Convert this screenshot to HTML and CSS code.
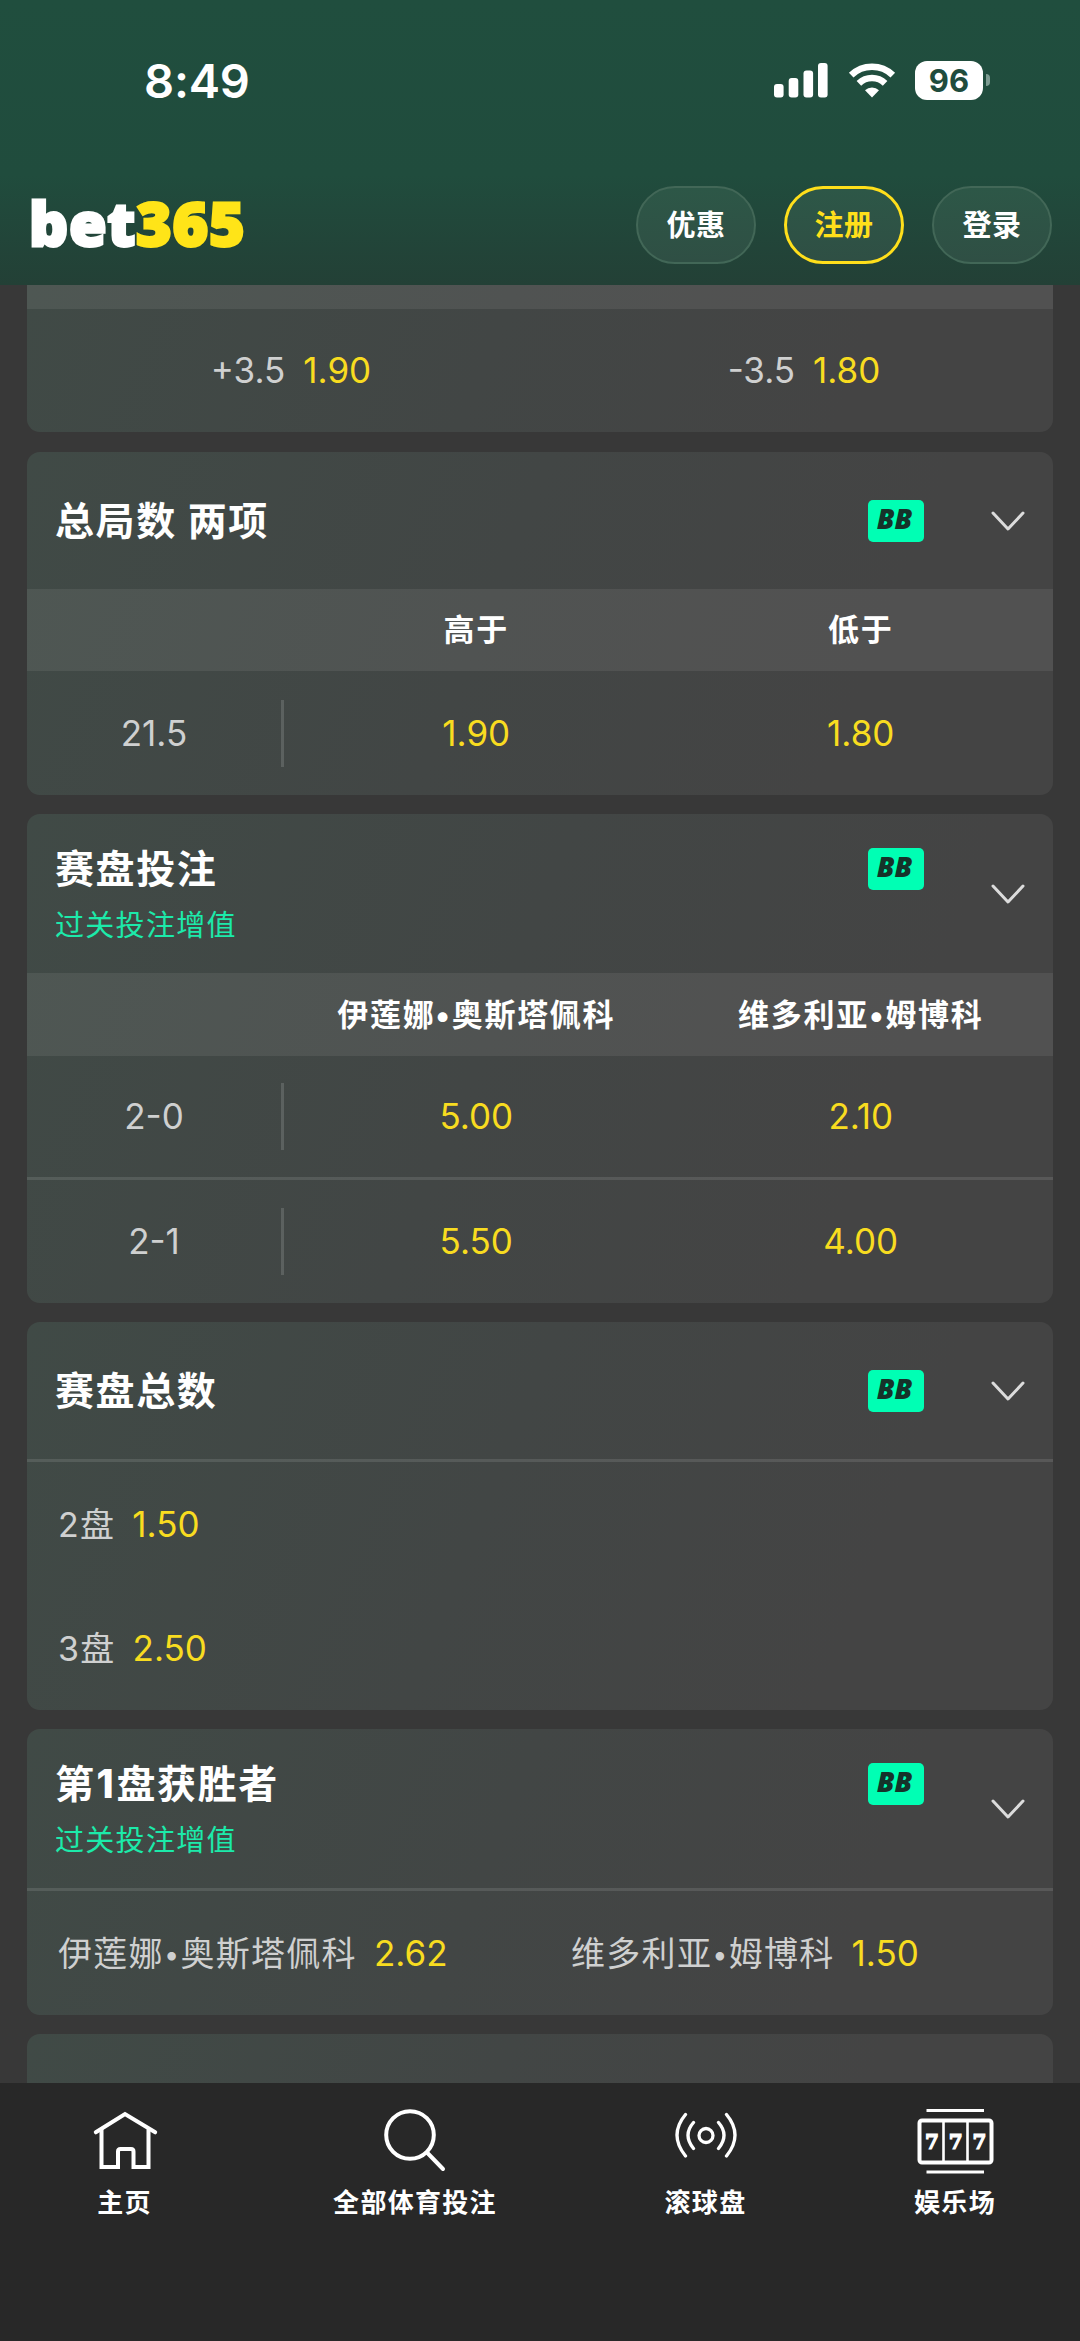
FILE: index.html
```html
<!DOCTYPE html>
<html lang="zh-CN">
<head>
<meta charset="utf-8">
<title>bet365</title>
<link rel="stylesheet" href="styles.css">
</head>
<body>
<svg width="0" height="0" class="defs" aria-hidden="true">
  <symbol id="chevron" viewBox="0 0 34 22"><path d="M2 3 17 19 32 3" fill="none" stroke="#dcdcdc" stroke-width="3" stroke-linecap="round" stroke-linejoin="round"/></symbol>
</svg>
<div class="screen">
  <header class="top">
    <div class="status">
      <div class="time">8:49</div>
      <div class="status-icons">
        <svg class="signal" width="54" height="38" viewBox="0 0 54 38" fill="#fff"><rect y="23" width="9.6" height="13.5" rx="3"/><rect x="14.7" y="17" width="9.6" height="19.5" rx="3"/><rect x="29.5" y="9.5" width="9.6" height="27" rx="3"/><rect x="44" y="2" width="9.6" height="34.5" rx="3"/></svg>
        <svg class="wifi" width="48" height="38" viewBox="0 0 48 38"><g fill="none" stroke="#fff" stroke-width="6.6"><path d="M3.2 14.2A30 30 0 0 1 44.8 14.2"/><path d="M10.9 22.3A19 19 0 0 1 37.1 22.3"/></g><path d="M17 29.2A10.3 10.3 0 0 1 31 29.2L24 36.6Z" fill="#fff"/></svg>
        <div class="battery">96</div>
        <div class="nub"></div>
      </div>
    </div>
    <div class="bar">
      <div class="logo">bet<span class="logo-num">365</span></div>
      <div class="actions">
        <div class="pill">优惠</div>
        <div class="pill join">注册</div>
        <div class="pill">登录</div>
      </div>
    </div>
  </header>

  <main class="list">
    <section class="card card-cut">
      <div class="strip strip-cut"></div>
      <div class="row two first">
        <div class="cell mid"><span class="name">+3.5</span><span class="odds">1.90</span></div>
        <div class="cell mid"><span class="name">-3.5</span><span class="odds">1.80</span></div>
      </div>
    </section>

    <section class="card">
      <div class="head"><div class="titles"><div class="title-row"><h2 class="title">总局数 两项</h2><span class="bb">BB</span></div></div><svg class="chev"><use href="#chevron"/></svg></div>
      <div class="strip"><span></span><span>高于</span><span>低于</span></div>
      <div class="row three"><div class="cell label">21.5</div><div class="cell odds">1.90</div><div class="cell odds">1.80</div></div>
    </section>

    <section class="card">
      <div class="head tall"><div class="titles"><div class="title-row"><h2 class="title">赛盘投注</h2><span class="bb">BB</span></div><div class="boost">过关投注增值</div></div><svg class="chev"><use href="#chevron"/></svg></div>
      <div class="strip strip-names"><span></span><span>伊莲娜<i class="dot">•</i>奥斯塔佩科</span><span>维多利亚<i class="dot">•</i>姆博科</span></div>
      <div class="row three upper"><div class="cell label">2-0</div><div class="cell odds">5.00</div><div class="cell odds">2.10</div></div>
      <div class="row three lower"><div class="cell label">2-1</div><div class="cell odds">5.50</div><div class="cell odds">4.00</div></div>
    </section>

    <section class="card">
      <div class="head ruled"><div class="titles"><div class="title-row"><h2 class="title">赛盘总数</h2><span class="bb">BB</span></div></div><svg class="chev"><use href="#chevron"/></svg></div>
      <div class="row"><div class="cell start"><span class="name">2盘</span><span class="odds">1.50</span></div></div>
      <div class="row"><div class="cell start"><span class="name">3盘</span><span class="odds">2.50</span></div></div>
    </section>

    <section class="card">
      <div class="head tall ruled"><div class="titles"><div class="title-row"><h2 class="title">第<b class="digit">1</b>盘获胜者</h2><span class="bb">BB</span></div><div class="boost">过关投注增值</div></div><svg class="chev"><use href="#chevron"/></svg></div>
      <div class="row two">
        <div class="cell start"><span class="name">伊莲娜<i class="dot">•</i>奥斯塔佩科</span><span class="odds">2.62</span></div>
        <div class="cell start"><span class="name">维多利亚<i class="dot">•</i>姆博科</span><span class="odds">1.50</span></div>
      </div>
    </section>

    <section class="card card-next"></section>
  </main>

  <nav class="nav">
    <div class="tab">
      <svg width="76" height="76" viewBox="0 0 76 76" fill="none" stroke="#fff" stroke-width="4" stroke-linecap="round"><path d="M8.800 29.300 38 11 68.200 29.300"/><path d="M14.500 27V64H31V48.500Q31 46 33.500 46H44Q46.500 46 46.500 48.500V64H61.500V27"/></svg>
      <span>主页</span>
    </div>
    <div class="tab">
      <svg width="76" height="76" viewBox="0 0 76 76" fill="none" stroke="#fff" stroke-width="4" stroke-linecap="round"><circle cx="33" cy="32" r="23.800"/><path d="M50 49.500 66 66"/></svg>
      <span>全部体育投注</span>
    </div>
    <div class="tab">
      <svg width="76" height="76" viewBox="0 0 76 76" fill="none" stroke="#fff" stroke-width="3.300" stroke-linecap="round"><circle cx="38" cy="32.500" r="7"/><path d="M25.500 19.500Q14.500 32 25.500 45.500M50.500 19.500Q61.500 32 50.500 45.500M17.500 11.500Q.500 32 17.500 53M58.500 11.500Q75.500 32 58.500 53"/></svg>
      <span>滚球盘</span>
    </div>
    <div class="tab">
      <svg width="80" height="76" viewBox="0 0 80 76" fill="none" stroke="#fff"><path d="M11.500 7.500H69M11.500 69H69" stroke-width="3"/><rect x="4.500" y="17.500" width="72" height="42" rx="2.500" stroke-width="4"/><path d="M28.500 17V59M52.500 17V59" stroke-width="2.600"/><g class="sevens" fill="#fff" stroke-width="1.200"><text x="17" y="45.500">7</text><text x="40.700" y="45.500">7</text><text x="64.500" y="45.500">7</text></g></svg>
      <span>娱乐场</span>
    </div>
  </nav>
</div>
</body>
</html>
```
FILE: styles.css
```css
* { box-sizing: border-box; }
body {
  margin: 0;
  background: #383838;
  color: #fff;
  font-family: Inter, "Noto Sans CJK SC", sans-serif;
}
.defs { position: absolute; }
.screen {
  width: 1080px;
  height: 2341px;
  display: flex;
  flex-direction: column;
  overflow: hidden;
}

/* Header */
.top {
  flex: none;
  height: 285px;
  background: linear-gradient(#204e3e 0, #204c3d 175px, #234036 285px);
}
.status {
  height: 160px;
  padding: 0 90px 0 144px;
  display: flex;
  justify-content: space-between;
  align-items: center;
}
.time { font-size: 47px; font-weight: 580; line-height: 60px; letter-spacing: -.2px; padding-top: 2px; }
.status-icons { display: flex; align-items: center; }
.wifi { margin: 0 19px 0 20px; }
.battery {
  width: 68px;
  height: 39px;
  border-radius: 12px;
  background: #fff;
  color: #204c3d;
  font-size: 31px;
  font-weight: 700;
  line-height: 39px;
  text-align: center;
}
.nub { width: 4px; height: 12px; margin-left: 3px; border-radius: 0 6px 6px 0; background: #7d9c92; }
.bar {
  height: 129px;
  padding: 0 28px 0 29px;
  display: flex;
  justify-content: space-between;
  align-items: center;
}
.logo { padding-bottom: 3px; font: 900 61px/78px "Noto Sans", sans-serif; letter-spacing: .7px; -webkit-text-stroke: 2.8px currentColor; }
.logo-num { color: #ffe418; }
.actions { display: flex; gap: 28px; }
.pill {
  width: 120px;
  height: 78px;
  padding-top: 1px;
  border: 2px solid #426757;
  border-radius: 39px;
  background: linear-gradient(#2d5747, #2f4f44);
  font-size: 29px;
  font-weight: 700;
  line-height: 74px;
  letter-spacing: .6px;
  text-align: center;
}
.join { border: 3px solid #ffdf1b; padding-top: 0; color: #ffdf1b; }

/* Markets */
.list {
  flex: none;
  height: 1798px;
  padding: 0 27px;
  display: flex;
  flex-direction: column;
  gap: 19px;
  overflow: hidden;
}
.card {
  flex: none;
  border-radius: 13px;
  background: linear-gradient(112deg, #404a46 0%, #424645 45%, #444444 80%);
  overflow: hidden;
}
.card-cut { border-radius: 0 0 13px 13px; margin-bottom: 1px; }
.card-next { height: 137px; }
.head {
  height: 137px;
  padding: 0 28px;
  display: flex;
  align-items: center;
}
.tall { height: 159px; }
.ruled { height: 140px; border-bottom: 3px solid rgba(255,255,255,.11); }
.tall.ruled { height: 162px; }
.titles { flex: none; width: 869px; }
.title-row { height: 60px; display: flex; justify-content: space-between; align-items: center; }
.title { margin: 0; font-size: 39px; font-weight: 700; line-height: 58px; letter-spacing: 1.6px; }
.digit { font-weight: 800; padding: 0 1px; }
.bb {
  width: 56px;
  height: 42px;
  padding-right: 3px;
  border-radius: 5px;
  background: #00ffb4;
  color: #15332a;
  font: italic 800 28px/36px "Open Sans", sans-serif;
  text-align: center;
}
.boost { height: 50px; color: #1ceaaa; font-size: 29px; line-height: 53px; letter-spacing: 1.3px; }
.chev { width: 34px; height: 22px; flex: none; margin-left: auto; }
.strip {
  height: 82px;
  padding-bottom: 5px;
  display: grid;
  grid-template-columns: 257px 1fr 1fr;
  align-items: center;
  text-align: center;
  background: rgba(255,255,255,.075);
  font-size: 31px;
  font-weight: 700;
  letter-spacing: 1.7px;
}
.strip-names { height: 83px; }
.strip-cut { height: 24px; }
.row { height: 124px; display: grid; align-items: center; font-size: 35px; }
.first, .lower { height: 123px; }
.upper { height: 124px; border-bottom: 3px solid rgba(255,255,255,.11); }
.two { grid-template-columns: 1fr 1fr; }
.three { grid-template-columns: 257px 1fr 1fr; text-align: center; }
.cell { line-height: 67px; }
.mid { display: flex; justify-content: center; gap: 18px; padding-left: 15px; }
.start { display: flex; gap: 17px; padding-left: 31px; }
.name, .label { color: #cfd0d0; font-weight: 400; }
.start .name { font-size: 34px; letter-spacing: 1.3px; }
.label { border-right: 3px solid rgba(255,255,255,.14); }
.odds { color: #f8dc20; font-weight: 400; }
.dot { font-style: normal; }
.start .dot { font-size: 27px; line-height: 1; vertical-align: 2px; }

/* Bottom navigation */
.nav {
  flex: 1;
  padding-top: 20px;
  display: grid;
  grid-template-columns: 249px 332px 249px 250px;
  background: #282828;
}
.tab { display: flex; flex-direction: column; align-items: center; font-size: 26px; font-weight: 700; line-height: 40px; letter-spacing: 1.3px; }
.tab svg { margin-bottom: 4px; }
.sevens { font: 900 20px "DejaVu Serif", serif; text-anchor: middle; letter-spacing: 0; }
```
